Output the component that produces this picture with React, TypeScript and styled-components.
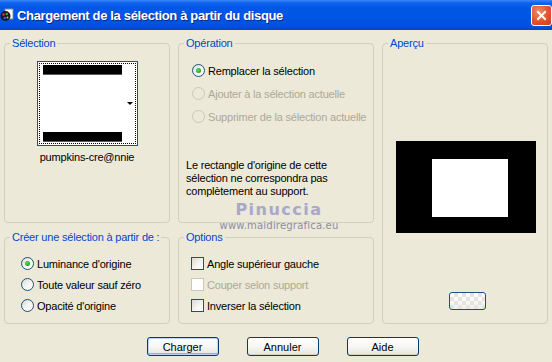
import styled, { createGlobalStyle } from 'styled-components';

const GlobalStyle = createGlobalStyle`
  html, body {
    margin: 0;
    padding: 0;
    background: #ece9d8;
  }
  body {
    font-family: "Liberation Sans", Arial, sans-serif;
    font-size: 11px;
    letter-spacing: -0.2px;
    color: #000;
  }
`;

const Window = styled.div`
  width: 552px;
  height: 362px;
  background: #ece9d8;
  display: flex;
  flex-direction: column;
  overflow: hidden;
`;

const TitleBar = styled.div`
  height: 30px;
  flex: none;
  display: flex;
  align-items: center;
  background: linear-gradient(
    to bottom,
    #3a86f6 0px,
    #0f62ec 3px,
    #0057e6 8px,
    #0054e3 20px,
    #0050dc 27px,
    #0044c4 30px
  );
`;

const TitleIcon = styled.div`
  width: 14px;
  height: 14px;
  margin-right: 3px;
  flex: none;
  display: flex;
`;

const TitleText = styled.div`
  flex: 1;
  color: #fff;
  font-family: "Liberation Sans", Arial, sans-serif;
  font-weight: bold;
  font-size: 13px;
  letter-spacing: -0.35px;
  text-shadow: 1px 1px 0 #0a2a8a;
`;

const CloseButton = styled.div`
  width: 21px;
  height: 21px;
  box-sizing: border-box;
  border: 1px solid #fff;
  border-radius: 3px;
  background: radial-gradient(circle at 35% 30%, #f08a6a 0%, #e0532c 55%, #c4401c 100%);
  display: flex;
  align-items: center;
  justify-content: center;
  margin-top: 1px;
`;

const Body = styled.div`
  flex: 1;
  display: flex;
  flex-direction: column;
  padding: 7px 4px 0 4px;
`;

const Grid = styled.div`
  display: grid;
  grid-template-columns: 166px 196px 166px;
  grid-template-rows: 186px 93px;
  column-gap: 8px;
  row-gap: 8px;
`;

const Group = styled.fieldset<{ $col: number; $row: string }>`
  margin: 0;
  padding: 0;
  min-width: 0;
  box-sizing: border-box;
  border: 1px solid #d0d0bf;
  border-radius: 4px;
  position: relative;
  grid-column: ${(p) => p.$col};
  grid-row: ${(p) => p.$row};
  display: flex;
  flex-direction: column;
`;

const Legend = styled.legend`
  margin-left: 5px;
  padding: 0 2px;
  color: #0046d5;
  font-size: 11px;
  line-height: 13px;
`;

const Thumb = styled.div`
  align-self: center;
  margin-top: 11px;
  width: 101px;
  height: 85px;
  box-sizing: border-box;
  border: 1px solid #294d7a;
  background: #fff;
  padding: 1px;
  display: flex;
`;

const ThumbInner = styled.div`
  flex: 1;
  border: 1px dotted #000;
  display: flex;
  flex-direction: column;
  justify-content: space-between;
  padding: 1px 13px 1px 3px;
  position: relative;
`;

const ThumbBar = styled.div`
  height: 9px;
  background: #000;
  border-bottom: 1px solid #5a5a5a;
`;

const ThumbArrow = styled.div`
  position: absolute;
  right: 2px;
  top: 38px;
  width: 0;
  height: 0;
  border-left: 3px solid transparent;
  border-right: 3px solid transparent;
  border-top: 3px solid #000;
`;

const FileName = styled.div`
  text-align: center;
  margin-top: 5px;
  line-height: 13px;
`;

const OptionList = styled.div<{ $pad: number; $top: number; $row: number }>`
  display: flex;
  flex-direction: column;
  padding-left: ${(p) => p.$pad}px;
  padding-top: ${(p) => p.$top}px;
  & > * {
    height: ${(p) => p.$row}px;
  }
`;

const Option = styled.div<{ $disabled?: boolean }>`
  display: flex;
  align-items: center;
  gap: 3px;
  color: ${(p) => (p.$disabled ? '#aca899' : '#000')};
  white-space: nowrap;
`;

const Radio = styled.span<{ $checked?: boolean; $disabled?: boolean }>`
  width: 13px;
  height: 13px;
  box-sizing: border-box;
  border-radius: 50%;
  flex: none;
  border: 1px solid ${(p) => (p.$disabled ? '#cac8bb' : '#1c5180')};
  background: ${(p) =>
    p.$disabled
      ? '#ece9d8'
      : 'linear-gradient(135deg, #dcdcd5 0%, #f4f4f0 50%, #ffffff 100%)'};
  display: flex;
  align-items: center;
  justify-content: center;
  &::after {
    content: '';
    display: ${(p) => (p.$checked ? 'block' : 'none')};
    width: 5px;
    height: 5px;
    border-radius: 50%;
    background: radial-gradient(circle at 40% 40%, #5ede5e 0%, #21a121 70%);
  }
`;

const Check = styled.span<{ $disabled?: boolean }>`
  width: 13px;
  height: 13px;
  box-sizing: border-box;
  flex: none;
  border: 1px solid ${(p) => (p.$disabled ? '#cac8bb' : '#1c5180')};
  background: ${(p) =>
    p.$disabled
      ? '#ffffff'
      : 'linear-gradient(135deg, #dcdcd5 0%, #f4f4f0 55%, #ffffff 100%)'};
`;

const Note = styled.p`
  margin: 31px 0 0 7px;
  line-height: 13px;
  width: 170px;
`;

const Watermark = styled.div`
  position: absolute;
  left: 38px;
  top: 151px;
  width: 124px;
  text-align: center;
  pointer-events: none;
`;

const WatermarkName = styled.div`
  font-family: "DejaVu Sans", sans-serif;
  font-weight: bold;
  font-size: 16px;
  letter-spacing: 1.5px;
  color: #a9a9c2;
  text-shadow: 1px 1px 0 #e6e4f0;
  line-height: 18px;
`;

const WatermarkUrl = styled.div`
  font-family: "DejaVu Sans", sans-serif;
  font-size: 10px;
  color: #8c8ca8;
  letter-spacing: 0.2px;
  line-height: 12px;
  margin-top: 1px;
`;

const PreviewFrame = styled.div`
  align-self: center;
  margin-top: 91px;
  margin-left: 2px;
  width: 140px;
  height: 92px;
  background: #000;
  box-sizing: border-box;
  padding: 18px 0 0 36px;
`;

const PreviewInner = styled.div`
  width: 76px;
  height: 58px;
  background: #fff;
`;

const SmallButton = styled.div`
  align-self: center;
  margin-top: 59px;
  margin-left: 4px;
  width: 37px;
  height: 18px;
  box-sizing: border-box;
  border: 1px solid #1c4e8c;
  border-radius: 3px;
  background:
    linear-gradient(45deg, #e4e4e0 25%, transparent 25%, transparent 75%, #e4e4e0 75%),
    linear-gradient(45deg, #e4e4e0 25%, transparent 25%, transparent 75%, #e4e4e0 75%),
    linear-gradient(to bottom, #ffffff, #f0f0ea);
  background-size: 8px 8px, 8px 8px, 100% 100%;
  background-position: 0 0, 4px 4px, 0 0;
`;

const ButtonRow = styled.div`
  display: flex;
  justify-content: center;
  gap: 28px;
  padding-left: 13px;
  margin-top: 13px;
`;

const Button = styled.button<{ $default?: boolean }>`
  width: 72px;
  height: 19px;
  padding: 0;
  box-sizing: border-box;
  border: 1px solid #003c74;
  border-radius: 3px;
  font-family: "Liberation Sans", Arial, sans-serif;
  font-size: 11px;
  color: #000;
  background: linear-gradient(to bottom, #ffffff 0%, #f6f6f3 50%, #e6e5de 100%);
  box-shadow: ${(p) =>
    p.$default ? 'inset 0 0 0 1px #bcd4f6, inset 0 -1px 0 1px #89ade4' : 'inset 0 -1px 0 #d6d0c5'};
`;

function AppIcon() {
  return (
    <svg width="14" height="14" viewBox="0 0 14 14">
      <rect x="5" y="1" width="8" height="10" fill="#fff" stroke="#7a8aa0" strokeWidth="1" />
      <circle cx="5.5" cy="8" r="5" fill="#1a1a24" />
      <circle cx="3.5" cy="6.5" r="1.3" fill="#e03030" />
      <circle cx="6.8" cy="6" r="1.2" fill="#30b030" />
      <circle cx="4.8" cy="10" r="1.2" fill="#3060e0" />
      <circle cx="7.5" cy="9.4" r="1" fill="#e0c030" />
    </svg>
  );
}

function CloseIcon() {
  return (
    <svg width="11" height="11" viewBox="0 0 11 11">
      <path d="M2 2 L9 9 M9 2 L2 9" stroke="#fff" strokeWidth="2" strokeLinecap="square" />
    </svg>
  );
}

function App() {
  return (
    <Window>
      <GlobalStyle />
      <TitleBar>
        <TitleIcon>
          <AppIcon />
        </TitleIcon>
        <TitleText>Chargement de la sélection à partir du disque</TitleText>
        <CloseButton>
          <CloseIcon />
        </CloseButton>
      </TitleBar>
      <Body>
        <Grid>
          <Group $col={1} $row="1">
            <Legend>Sélection</Legend>
            <Thumb>
              <ThumbInner>
                <ThumbBar />
                <ThumbBar />
                <ThumbArrow />
              </ThumbInner>
            </Thumb>
            <FileName>pumpkins-cre@nnie</FileName>
          </Group>
          <Group $col={2} $row="1">
            <Legend>Opération</Legend>
            <OptionList $pad={13} $top={9} $row={23}>
              <Option>
                <Radio $checked />
                Remplacer la sélection
              </Option>
              <Option $disabled>
                <Radio $disabled />
                Ajouter à la sélection actuelle
              </Option>
              <Option $disabled>
                <Radio $disabled />
                Supprimer de la sélection actuelle
              </Option>
            </OptionList>
            <Note>
              Le rectangle d'origine de cette sélection ne correspondra pas complètement au support.
            </Note>
            <Watermark>
              <WatermarkName>Pinuccia</WatermarkName>
              <WatermarkUrl>www.maidiregrafica.eu</WatermarkUrl>
            </Watermark>
          </Group>
          <Group $col={3} $row="1 / span 2">
            <Legend>Aperçu</Legend>
            <PreviewFrame>
              <PreviewInner />
            </PreviewFrame>
            <SmallButton />
          </Group>
          <Group $col={1} $row="2">
            <Legend>Créer une sélection à partir de :</Legend>
            <OptionList $pad={16} $top={9} $row={21}>
              <Option>
                <Radio $checked />
                Luminance d'origine
              </Option>
              <Option>
                <Radio />
                Toute valeur sauf zéro
              </Option>
              <Option>
                <Radio />
                Opacité d'origine
              </Option>
            </OptionList>
          </Group>
          <Group $col={2} $row="2">
            <Legend>Options</Legend>
            <OptionList $pad={12} $top={9} $row={21}>
              <Option>
                <Check />
                Angle supérieur gauche
              </Option>
              <Option $disabled>
                <Check $disabled />
                Couper selon support
              </Option>
              <Option>
                <Check />
                Inverser la sélection
              </Option>
            </OptionList>
          </Group>
        </Grid>
        <ButtonRow>
          <Button $default>Charger</Button>
          <Button>Annuler</Button>
          <Button>Aide</Button>
        </ButtonRow>
      </Body>
    </Window>
  );
}

export default App;
